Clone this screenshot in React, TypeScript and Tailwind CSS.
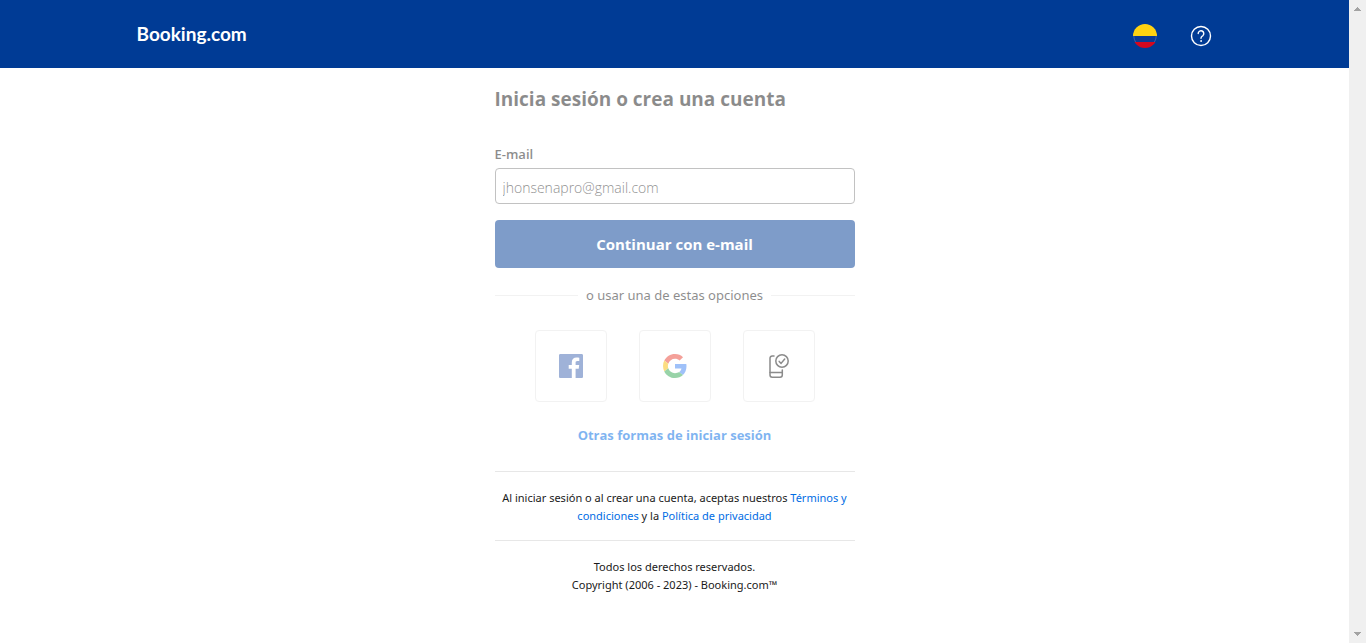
import type { ReactNode } from "react";

function ColombiaFlag() {
  return (
    <svg viewBox="0 0 24 24" className="size-6" aria-hidden="true">
      <clipPath id="flag-round">
        <circle cx="12" cy="12" r="12" />
      </clipPath>
      <g clipPath="url(#flag-round)">
        <path fill="#ffd311" d="M0 0h24v12H0z" />
        <path fill="#0a3a94" d="M0 12h24v6H0z" />
        <path fill="#d4081f" d="M0 18h24v6H0z" />
      </g>
      <path d="M.8 12a11.2 11.2 0 0 0 1.8 6" fill="none" stroke="#3561aa" strokeWidth="1" />
      <path d="M23.2 12a11.2 11.2 0 0 1-1.8 6" fill="none" stroke="#3561aa" strokeWidth="1" />
    </svg>
  );
}

function HelpIcon() {
  return (
    <svg viewBox="0 0 24 24" className="size-6" fill="none" stroke="#fff" strokeWidth="1.4" strokeLinecap="round" strokeLinejoin="round" aria-hidden="true">
      <circle cx="12" cy="12" r="9.5" />
      <path d="M9.2 9.6a2.8 2.8 0 1 1 4.6 2.1c-1 .8-1.8 1.2-1.8 2.5" />
      <circle cx="12" cy="17" r=".5" fill="#fff" strokeWidth="0.8" />
    </svg>
  );
}

function FacebookIcon() {
  return (
    <svg viewBox="0 0 24 24" className="size-6" aria-hidden="true">
      <path
        fill="#4267b2"
        d="M22.7 0H1.3C.6 0 0 .6 0 1.3v21.4c0 .7.6 1.3 1.3 1.3h11.5v-9.3H9.7v-3.6h3.1V8.4c0-3.1 1.9-4.8 4.7-4.8 1.3 0 2.5.1 2.8.2V7h-1.9c-1.5 0-1.8.7-1.8 1.8v2.3h3.6l-.5 3.6h-3.1V24h6.1c.7 0 1.3-.6 1.3-1.3V1.3c0-.7-.6-1.3-1.3-1.3z"
      />
    </svg>
  );
}

function GoogleIcon() {
  return (
    <svg viewBox="0 0 48 48" className="size-6" aria-hidden="true">
      <path fill="#EA4335" d="M24 9.5c3.54 0 6.71 1.22 9.21 3.6l6.85-6.85C35.9 2.38 30.47 0 24 0 14.62 0 6.51 5.38 2.56 13.22l7.98 6.19C12.43 13.72 17.74 9.5 24 9.5z" />
      <path fill="#4285F4" d="M46.98 24.55c0-1.57-.15-3.09-.38-4.55H24v9.02h12.94c-.58 2.96-2.26 5.48-4.78 7.18l7.73 6c4.51-4.18 7.09-10.36 7.09-17.65z" />
      <path fill="#FBBC05" d="M10.53 28.59c-.48-1.45-.76-2.99-.76-4.59s.27-3.14.76-4.59l-7.98-6.19C.92 16.46 0 20.12 0 24c0 3.88.92 7.54 2.56 10.78l7.97-6.19z" />
      <path fill="#34A853" d="M24 48c6.48 0 11.93-2.13 15.89-5.81l-7.73-6c-2.15 1.45-4.92 2.3-8.16 2.3-6.26 0-11.57-4.22-13.47-9.91l-7.98 6.19C6.51 42.62 14.62 48 24 48z" />
    </svg>
  );
}

function PhoneCheckIcon() {
  return (
    <svg viewBox="0 0 24 24" className="size-6" fill="none" stroke="#1a1a1a" strokeWidth="1.5" strokeLinecap="round" strokeLinejoin="round" aria-hidden="true">
      <path d="M7 2H5.2a2.2 2.2 0 0 0-2.2 2.2v16.8a2.2 2.2 0 0 0 2.2 2.2h7.9a2.2 2.2 0 0 0 2.2-2.2V16" />
      <path d="M3 18.6h12.3" />
      <circle cx="15" cy="7" r="6.2" />
      <path d="m12.2 7.4 1.9 2 3.6-4.4" />
    </svg>
  );
}

function SocialButton({ label, children }: { label: string; children: ReactNode }) {
  return (
    <button type="button" aria-label={label} className="flex size-[72px] items-center justify-center rounded border border-[#e7e7e7]">
      {children}
    </button>
  );
}

function ScrollTrack() {
  return (
    <div aria-hidden="true" className="flex w-[17px] shrink-0 flex-col items-center justify-between bg-[#f0f0f0] py-[7px]">
      <svg viewBox="0 0 7 4" className="h-1 w-[7px]" shapeRendering="crispEdges">
        <path fill="#a3a3a3" d="M3 0h1v1h1v1h1v1h1v1H0V3h1V2h1V1h1z" />
      </svg>
      <svg viewBox="0 0 7 4" className="h-1 w-[7px]" shapeRendering="crispEdges">
        <path fill="#a3a3a3" d="M0 0h7v1H6v1H5v1H4v1H3V3H2V2H1V1H0z" />
      </svg>
    </div>
  );
}

export default function App() {
  return (
    <div className="flex min-h-screen bg-white font-['Segoe_UI','Open_Sans',sans-serif] text-[#1a1a1a]">
      <div className="min-w-0 flex-1">
        <header className="bg-[#003b95]">
          <div className="mx-auto flex h-[68px] max-w-[1108px] items-center justify-between px-4">
            <a href="#" className="font-[Lato,sans-serif] text-[19px] font-bold text-white">
              Booking.com
            </a>
            <div className="flex items-center gap-8 pt-1">
              <button type="button" aria-label="Seleccionar idioma">
                <ColombiaFlag />
              </button>
              <button type="button" aria-label="Ayuda">
                <HelpIcon />
              </button>
            </div>
          </div>
        </header>

        <main className="mx-auto w-full max-w-[360px] pt-[17px]">
          <form className="opacity-50" onSubmit={(event) => event.preventDefault()}>
            <h1 className="text-[19px] leading-7 font-bold whitespace-nowrap">Inicia sesión o crea una cuenta</h1>
            <label htmlFor="email" className="mt-[31px] block text-[13px] leading-5 font-semibold">
              E-mail
            </label>
            <input
              id="email"
              type="email"
              defaultValue="jhonsenapro@gmail.com"
              className="mt-1 block h-9 w-full rounded border border-[#868686] px-[7px] pt-0.5 text-[14px] font-light"
            />
            <button type="submit" className="mt-4 block h-12 w-full rounded bg-[#003b95] text-[15px] font-bold text-white">
              Continuar con e-mail
            </button>
            <div className="mt-4 flex items-center gap-2">
              <span className="h-px flex-1 bg-[#e7e7e7]" />
              <span className="font-['Noto_Sans',sans-serif] text-[13px] leading-[22px]">o usar una de estas opciones</span>
              <span className="h-px flex-1 bg-[#e7e7e7]" />
            </div>
            <div className="mt-6 flex justify-center gap-8">
              <SocialButton label="Iniciar sesión con Facebook">
                <FacebookIcon />
              </SocialButton>
              <SocialButton label="Iniciar sesión con Google">
                <GoogleIcon />
              </SocialButton>
              <SocialButton label="Iniciar sesión con el móvil">
                <PhoneCheckIcon />
              </SocialButton>
            </div>
            <div className="mt-[23px] text-center text-[13px] leading-5 font-bold text-[#006ce4]">
              <a href="#">Otras formas de iniciar sesión</a>
            </div>
          </form>

          <footer className="mt-[26px] text-center font-['Noto_Sans',sans-serif] text-[11px] leading-[18px]">
            <p className="border-t border-[#e7e7e7] pt-[17px] pb-[15px]">
              Al iniciar sesión o al crear una cuenta, aceptas nuestros{" "}
              <a href="#" className="text-[#006ce4]">Términos y condiciones</a> y la{" "}
              <a href="#" className="text-[#006ce4]">Política de privacidad</a>
            </p>
            <p className="border-t border-[#e7e7e7] pt-[17px]">
              Todos los derechos reservados.
              <br />
              Copyright (2006 - 2023) - Booking.com™
            </p>
          </footer>
        </main>
      </div>
      <ScrollTrack />
    </div>
  );
}
